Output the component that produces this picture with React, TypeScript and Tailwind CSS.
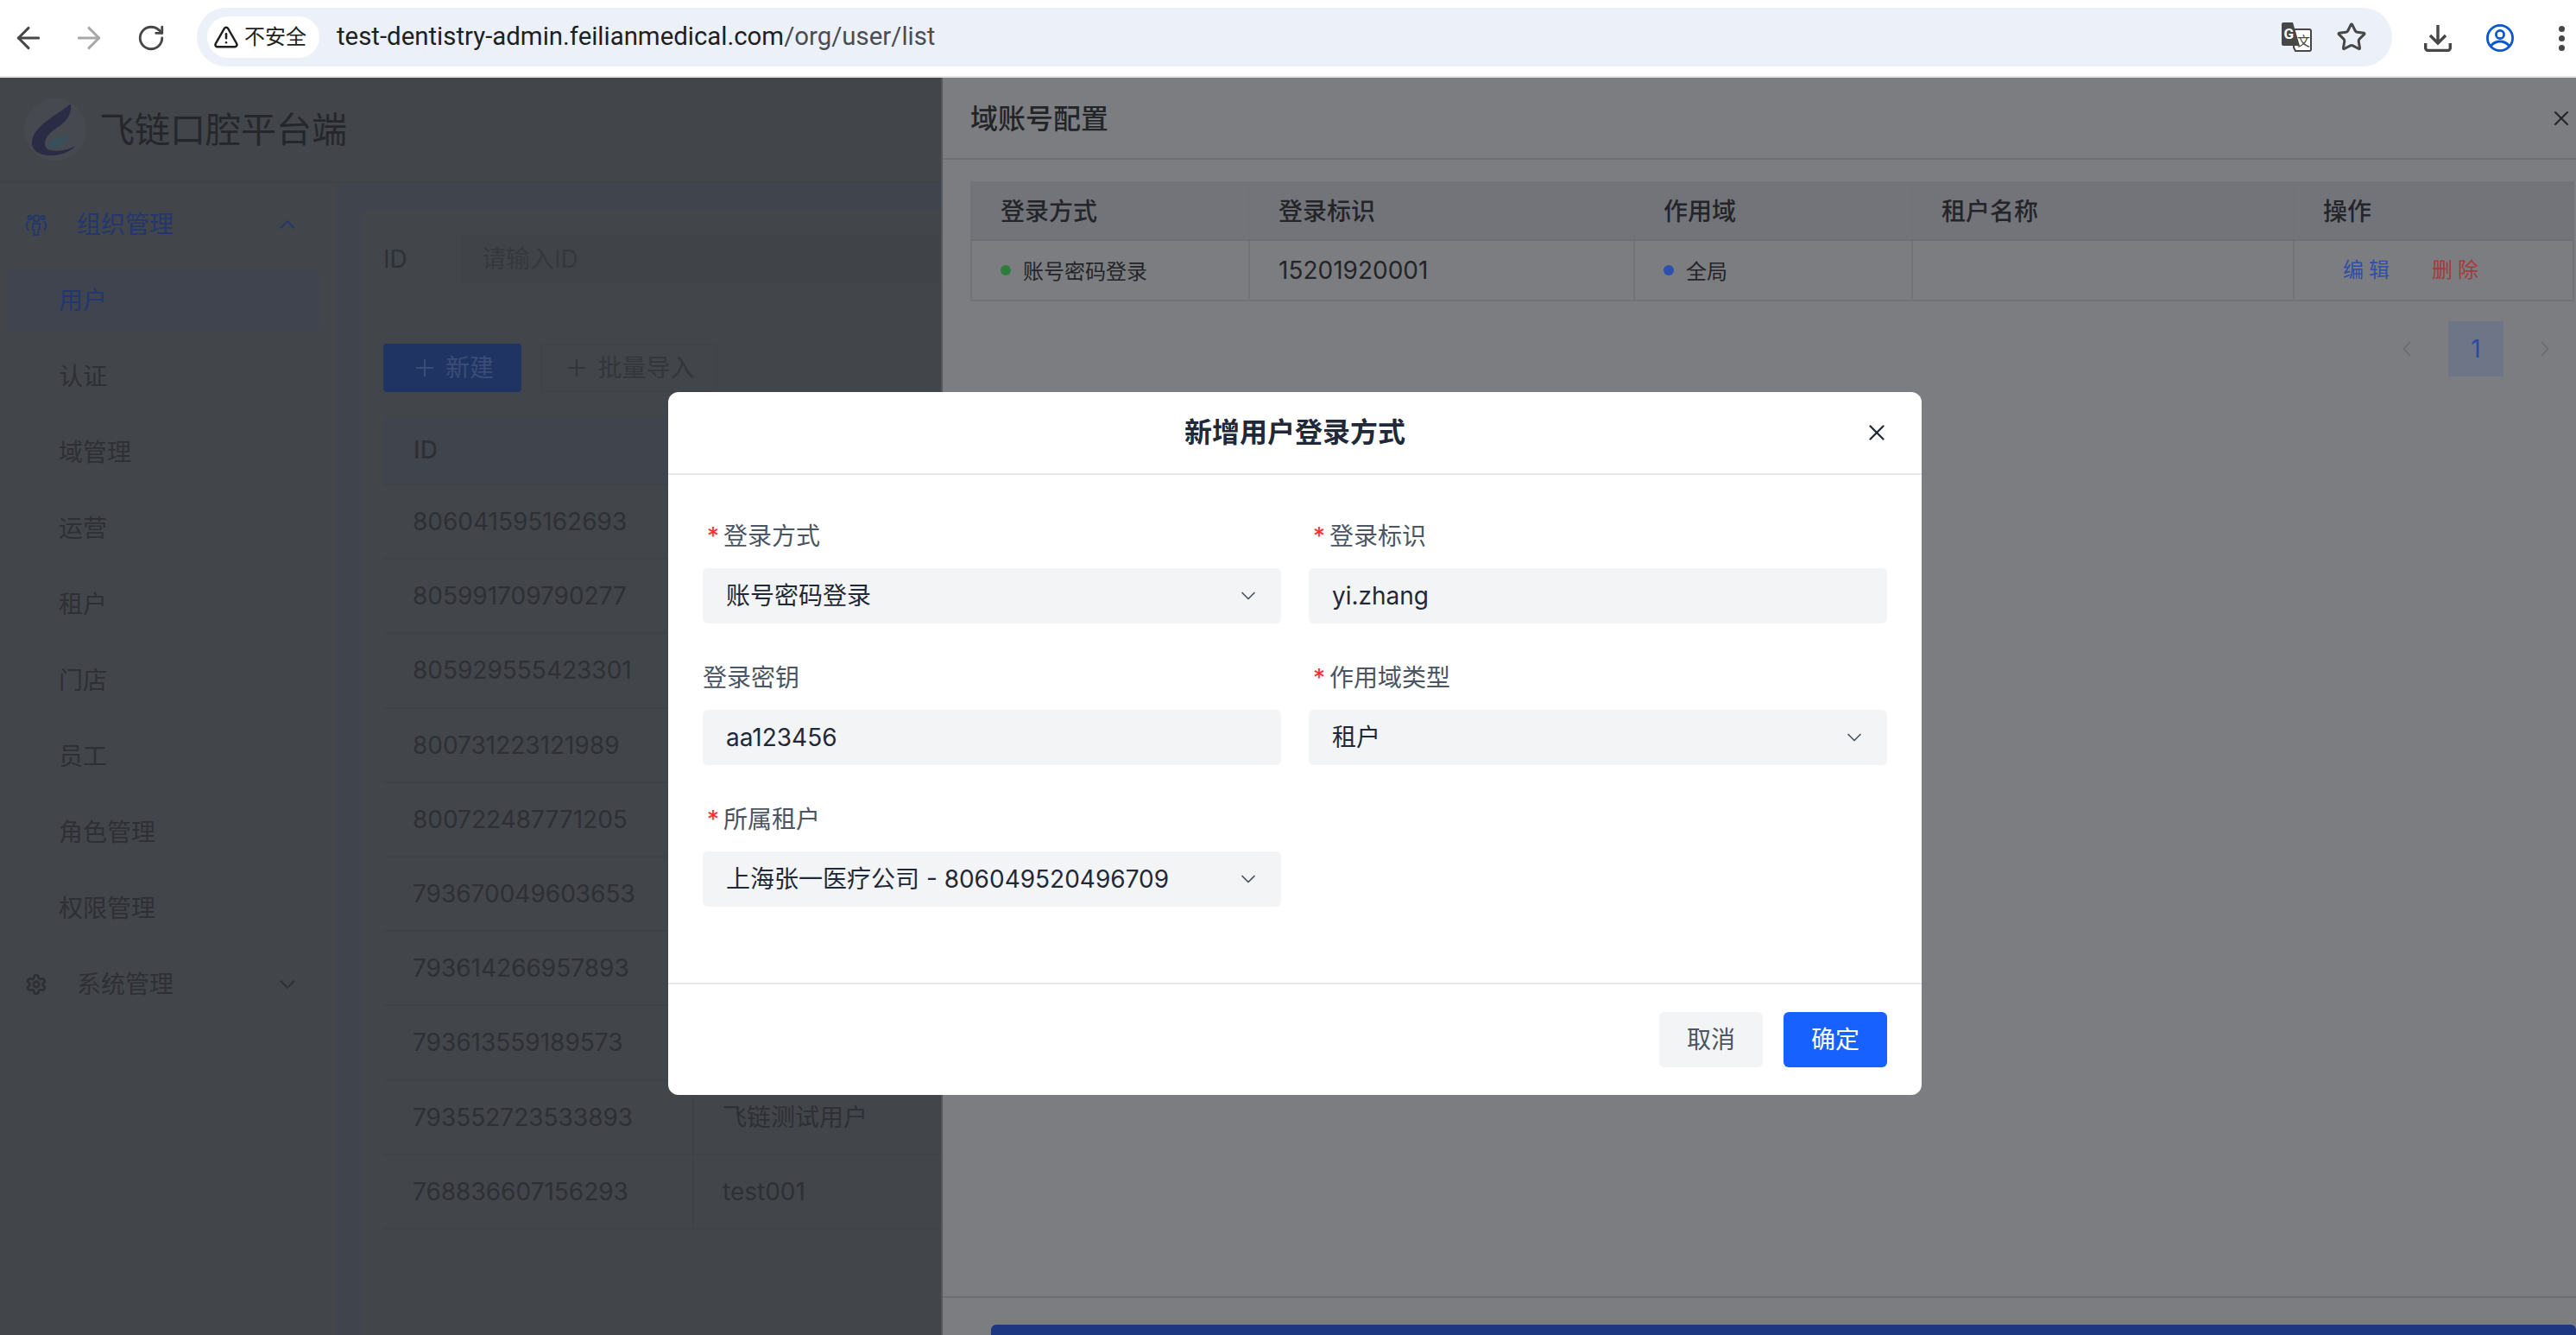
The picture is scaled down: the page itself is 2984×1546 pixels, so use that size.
import { ArrowLeft, ArrowRight, ChevronDown, ChevronLeft, ChevronRight, ChevronUp, Plus, RotateCw, Settings, Star, TriangleAlert, X } from "lucide-react";

const menuItems = ["认证", "域管理", "运营", "租户", "门店", "员工", "角色管理", "权限管理"];

const rows: { id: string; name?: string }[] = [
  { id: "806041595162693" },
  { id: "805991709790277" },
  { id: "805929555423301" },
  { id: "800731223121989" },
  { id: "800722487771205" },
  { id: "793670049603653" },
  { id: "793614266957893" },
  { id: "793613559189573" },
  { id: "793552723533893", name: "飞链测试用户" },
  { id: "768836607156293", name: "test001" },
];

const TranslateIcon = () => (
  <svg width="36" height="34" viewBox="0 0 36 34">
    <path d="M15 8h18a2 2 0 0 1 2 2v21a2 2 0 0 1-2 2H17l-2-4z" fill="#fff" stroke="#474747" strokeWidth="2" />
    <path d="M3 0h11l8 27H3a2 2 0 0 1-2-2V2a2 2 0 0 1 2-2z" fill="#474747" />
    <text x="3.5" y="19" fontSize="17" fontWeight="700" fill="#fff" fontFamily="Roboto, sans-serif">G</text>
    <text x="19" y="27" fontSize="15" fill="#474747" fontFamily="'Noto Sans CJK SC', sans-serif">文</text>
  </svg>
);

const DownloadIcon = () => (
  <svg width="32" height="32" viewBox="0 0 32 32" fill="none" stroke="#474747" strokeWidth="3.4">
    <path d="M16 1v20M7 13l9 9 9-9" />
    <path d="M1.7 22v5.5a3 3 0 0 0 3 3h22.600a3 3 0 0 0 3-3V22" />
  </svg>
);

const ProfileIcon = () => (
  <svg width="32" height="32" viewBox="0 0 32 32" fill="none" stroke="#0b57d0" strokeWidth="2.800">
    <circle cx="16" cy="16" r="14.6" />
    <circle cx="16" cy="12" r="4.600" />
    <path d="M5.500 25c3-3.500 6.500-5 10.500-5s7.500 1.500 10.500 5" />
  </svg>
);

const Logo = () => (
  <svg width="72" height="72" viewBox="0 0 72 72">
    <circle cx="36" cy="36" r="36" fill="#46494f" />
    <path d="M53 7C40 18 10 32 9 50c-1 12 13 17 25 16 12-1 21-6 26-11-10 5-22 7-30 5-8-2-8-12 0-20 12-10 25-14 24-33z" fill="#292c44" />
    <path d="M27 57c1-9 11-14 25-13-4 8-14 13-25 13z" fill="#37505c" />
  </svg>
);

const OrgIcon = () => (
  <svg width="26" height="28" viewBox="0 0 26 28" fill="none" stroke="#22376e" strokeWidth="2">
    <circle cx="13" cy="7" r="3.500" />
    <circle cx="5.500" cy="6" r="2" />
    <circle cx="20.500" cy="6" r="2" />
    <path d="M9 13h8v6l-1.500 1v6h-5v-6L9 19z" />
    <path d="M4 10C1 13 1 17 4 21M22 10c3 3 3 7 0 11" />
  </svg>
);

const Required = () => <span className="w-[24px] text-center text-[28px] leading-[44px] text-[#ff2d2d]">*</span>;

const Field = ({ label, value, required, select }: { label: string; value: string; required?: boolean; select?: boolean }) => (
  <div className="flex flex-col gap-[15px]">
    <label className="flex h-[46px] items-center pt-[2px] text-[28px] leading-[44px] text-[#4b5563]">
      {required && <Required />}
      {label}
    </label>
    <div className="flex h-[64px] items-center justify-between rounded-[6px] bg-[#f3f4f6] pl-[27px] pr-[24px] text-[28px] text-[#1f2937]">
      <span>{value}</span>
      {select && <ChevronDown size={28} strokeWidth={1.5} className="text-[#4b5563]" />}
    </div>
  </div>
);

const BrowserBar = () => (
  <header className="flex h-[90px] shrink-0 items-center border-b-2 border-[#e3e3e3] bg-white pl-[13px]">
    <ArrowLeft size={40} strokeWidth={1.8} className="text-[#474747]" />
    <ArrowRight size={40} strokeWidth={1.8} className="ml-[30px] text-[#a8a8a8]" />
    <RotateCw size={34} strokeWidth={2} className="ml-[35px] text-[#474747]" />
    <div className="ml-[36px] -mt-[2px] flex h-[68px] w-[2543px] items-center rounded-full bg-[#ebf0f9] pl-[12px] pr-[29px]">
      <div className="flex h-[48px] w-[130px] items-center gap-[6px] rounded-full bg-white pl-[7px] text-[24px] text-[#1f1f1f]">
        <TriangleAlert size={30} strokeWidth={2} />
        不安全
      </div>
      <span className="ml-[20px] -mt-[1px] font-['Roboto','Noto_Sans_CJK_SC',sans-serif] text-[29.4px] text-[#1f1f1f]">
        test-dentistry-admin.feilianmedical.com<span className="text-[#4a4d53]">/org/user/list</span>
      </span>
      <div className="ml-auto flex items-center gap-[28px]">
        <TranslateIcon />
        <Star size={36} strokeWidth={2} className="text-[#474747]" />
      </div>
    </div>
    <div className="ml-[37px]"><DownloadIcon /></div>
    <div className="ml-[40px]"><ProfileIcon /></div>
    <div className="ml-[52px] flex flex-col gap-[4px]">
      <span className="size-[7px] rounded-full bg-[#474747]" />
      <span className="size-[7px] rounded-full bg-[#474747]" />
      <span className="size-[7px] rounded-full bg-[#474747]" />
    </div>
  </header>
);

const Sidebar = () => (
  <aside className="w-[390px] shrink-0 pt-[4px] text-[28px] text-[#2e3035]">
    <div className="flex h-[88px] items-center pl-[29px] pr-[42px] text-[#22376e]">
      <OrgIcon />
      <span className="ml-[34px] flex-1">组织管理</span>
      <ChevronUp size={30} strokeWidth={1.5} />
    </div>
    <div className="flex h-[88px] items-center py-[7px] pl-[8px] pr-[20px] text-[#22376e]">
      <div className="flex h-full w-full items-center rounded-[8px] bg-[#40444e] pl-[60px]">用户</div>
    </div>
    {menuItems.map((item) => (
      <div key={item} className="flex h-[88px] items-center pl-[68px]">{item}</div>
    ))}
    <div className="flex h-[88px] items-center pl-[29px] pr-[42px]">
      <Settings size={26} strokeWidth={2.6} />
      <span className="ml-[34px] flex-1">系统管理</span>
      <ChevronDown size={30} strokeWidth={1.5} />
    </div>
  </aside>
);

const PageBehind = () => (
  <div className="flex h-full w-[1092px] flex-col bg-[#424549]">
    <div className="flex h-[122px] shrink-0 items-center gap-[15px] border-b-2 border-[#3f4247] pl-[28px]">
      <Logo />
      <span className="pt-[2px] text-[41px] text-[#25272c]">飞链口腔平台端</span>
    </div>
    <div className="flex flex-1 overflow-hidden">
      <Sidebar />
      <main className="flex-1 bg-[#40444d] pl-[28px] pt-[31px]">
        <div className="h-full bg-[#424549] pl-[26px] pt-[29px] text-[28px] text-[#2e3035]">
          <div className="flex h-[56px] items-center">
            <span className="w-[90px] text-[#2f3136]">ID</span>
            <div className="flex h-full flex-1 items-center bg-[#404449] pl-[24px] text-[#35383d]">请输入ID</div>
          </div>
          <div className="mt-[70px] flex gap-[22px]">
            <div className="flex h-[56px] w-[160px] items-center justify-center gap-[8px] rounded-[4px] bg-[#1f3462] text-[#3a4d76]">
              <Plus size={32} strokeWidth={1.6} />
              新建
            </div>
            <div className="flex h-[56px] w-[205px] items-center justify-center gap-[8px] rounded-[4px] border-2 border-[#404347] text-[#33363b]">
              <Plus size={32} strokeWidth={1.6} />
              批量导入
            </div>
          </div>
          <div className="mt-[28px] border-b-2 border-[#3f4247]">
            <div className="flex h-[78px] items-center bg-[#40444d] pl-[35px] font-medium">ID</div>
            {rows.map((row) => (
              <div key={row.id} className="flex h-[86.200px] items-center border-t-2 border-[#3f4247]">
                <span className="w-[360px] border-r-2 border-[#3f4247] pl-[34px] leading-[86px]">{row.id}</span>
                <span className="pl-[33px]">{row.name}</span>
              </div>
            ))}
          </div>
        </div>
      </main>
    </div>
  </div>
);

const cellClass = "flex items-center border-r-2 border-[#727378] pl-[33px]";

const ConfigDrawer = () => (
  <section className="absolute inset-y-0 right-0 flex w-[1894px] flex-col border-l-2 border-[#55565a] bg-[#7c7d80] text-[#232529]">
    <div className="flex h-[95px] shrink-0 items-center justify-between border-b-2 border-[#707176] pl-[32px] pr-[3px]">
      <span className="pt-[2px] text-[32px] font-medium">域账号配置</span>
      <X size={28} strokeWidth={1.8} />
    </div>
    <div className="ml-[32px] mt-[25px] w-[1858px] border-2 border-[#727378] text-[28px]">
      <div className="grid h-[67px] grid-cols-[322px_446px_322px_442px_322px] border-b-2 border-[#6e6f74] bg-[#737479] font-medium">
        {["登录方式", "登录标识", "作用域", "租户名称", "操作"].map((title) => (
          <div key={title} className={cellClass}>{title}</div>
        ))}
      </div>
      <div className="grid h-[68px] grid-cols-[322px_446px_322px_442px_322px]">
        <div className={cellClass}>
          <span className="size-[12px] rounded-full bg-[#2e7d3e]" />
          <span className="ml-[14px] pt-[4px] text-[24px]">账号密码登录</span>
        </div>
        <div className={cellClass}>15201920001</div>
        <div className={cellClass}>
          <span className="size-[12px] rounded-full bg-[#2d50ae]" />
          <span className="ml-[14px] pt-[4px] text-[24px]">全局</span>
        </div>
        <div className={cellClass} />
        <div className="flex items-center gap-[43px] pl-[56px] text-[24px]">
          <span className="tracking-[6px] text-[#2f4fa8]">编辑</span>
          <span className="tracking-[6px] text-[#a53a3d]">删除</span>
        </div>
      </div>
    </div>
    <div className="mt-[23px] flex justify-end gap-[16px] pr-[4px]">
      <div className="flex h-[64px] w-[64px] items-center justify-center text-[#6a6b70]">
        <ChevronLeft size={30} strokeWidth={1.4} />
      </div>
      <div className="flex h-[64px] w-[64px] items-center justify-center bg-[#6e7586] text-[28px] text-[#2a4a9e]">1</div>
      <div className="flex h-[64px] w-[64px] items-center justify-center text-[#6a6b70]">
        <ChevronRight size={30} strokeWidth={1.4} />
      </div>
    </div>
    <div className="mt-auto h-[45px] shrink-0 overflow-hidden border-t-2 border-[#6e6f74] pl-[56px] pt-[31px]">
      <div className="h-[64px] rounded-t-[6px] bg-[#1c3880]" />
    </div>
  </section>
);

const LoginMethodDialog = () => (
  <div className="absolute left-[774px] top-[364px] flex h-[814px] w-[1452px] flex-col rounded-[12px] bg-white">
    <div className="relative flex h-[96px] shrink-0 items-center justify-center border-b-2 border-[#e5e7eb]">
      <span className="text-[32px] font-semibold text-[#1f2937]">新增用户登录方式</span>
      <X size={30} strokeWidth={1.8} className="absolute right-[37px] top-[32px] text-[#1f2937]" />
    </div>
    <div className="grid flex-1 grid-cols-[670px_670px] content-start gap-x-[32px] gap-y-[39px] px-[40px] pt-[47px]">
      <Field label="登录方式" value="账号密码登录" required select />
      <Field label="登录标识" value="yi.zhang" required />
      <Field label="登录密钥" value="aa123456" />
      <Field label="作用域类型" value="租户" required select />
      <Field label="所属租户" value="上海张一医疗公司 - 806049520496709" required select />
    </div>
    <div className="flex h-[130px] shrink-0 justify-end gap-[24px] border-t-2 border-[#e5e7eb] pr-[40px] pt-[32px] text-[28px]">
      <div className="flex h-[64px] w-[120px] items-center justify-center rounded-[6px] bg-[#f3f4f6] text-[#4b5563]">取消</div>
      <div className="flex h-[64px] w-[120px] items-center justify-center rounded-[6px] bg-[#1661ff] text-white">确定</div>
    </div>
  </div>
);

export default function App() {
  return (
    <div className="flex h-[1546px] w-[2984px] flex-col overflow-hidden bg-white font-[Inter,'Noto_Sans_CJK_SC',sans-serif]">
      <BrowserBar />
      <div className="relative flex-1 overflow-hidden bg-[#424549]">
        <PageBehind />
        <ConfigDrawer />
        <LoginMethodDialog />
      </div>
    </div>
  );
}
